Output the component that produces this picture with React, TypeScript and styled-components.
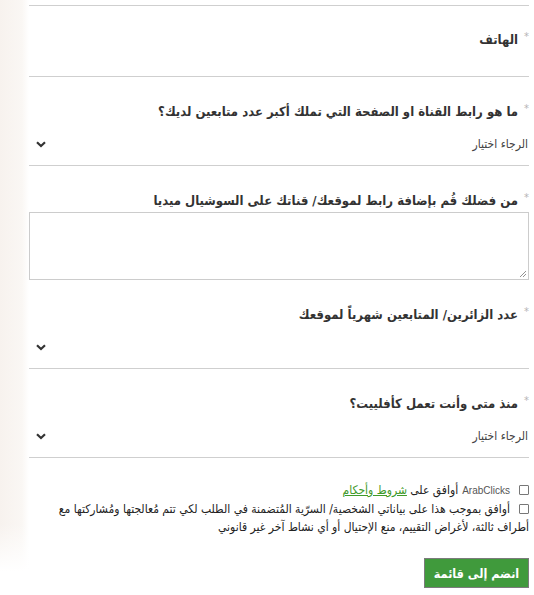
import React from "react";
import styled, { createGlobalStyle } from "styled-components";

const GlobalStyle = createGlobalStyle`
  html, body {
    margin: 0;
    padding: 0;
    background: #ffffff;
  }
  body {
    font-family: "DejaVu Sans Condensed", "DejaVu Sans", sans-serif;
  }
`;

const Page = styled.div`
  min-height: 595px;
  padding: 5px 5px 0 29px;
  box-sizing: border-box;
  background: linear-gradient(
      to bottom,
      rgba(255, 255, 255, 0) 0%,
      rgba(255, 255, 255, 0) 88%,
      #ffffff 96%
    ),
    linear-gradient(to right, #f7f2ee 0, #faf7f4 22px, #ffffff 29px);
`;

const Form = styled.form`
  direction: rtl;
  width: 500px;
  background: #ffffff;
  border-top: 1px solid #cfcfcf;
`;

const Field = styled.div<{ $divider?: boolean; $pb?: number; $pt?: number }>`
  display: flex;
  flex-direction: column;
  gap: 2px;
  padding-top: ${(p) => (p.$pt !== undefined ? p.$pt : 24)}px;
  padding-bottom: ${(p) => p.$pb || 0}px;
  border-bottom: ${(p) => (p.$divider ? "1px solid #cfcfcf" : "none")};
`;

const Label = styled.label`
  display: flex;
  align-items: center;
  gap: 6px;
  height: 20px;
  font-size: 13px;
  font-weight: bold;
  color: #333333;
  white-space: nowrap;
`;

const Required = styled.span`
  font-size: 11px;
  font-weight: normal;
  color: #b5b5b5;
  margin-top: -5px;
`;

const SelectBox = styled.div`
  height: 42px;
  display: flex;
  align-items: center;
  justify-content: space-between;
  padding: 0 1px 0 7px;
  font-size: 12px;
  color: #444444;
`;

const Chevron = () => (
  <svg width="10" height="7" viewBox="0 0 10 7">
    <path
      d="M1 1.2 L5 5 L9 1.2"
      fill="none"
      stroke="#333"
      strokeWidth="2.2"
    />
  </svg>
);

const TextArea = styled.div`
  position: relative;
  height: 68px;
  border: 1px solid #cccccc;
  box-sizing: border-box;
`;

const Grip = styled.svg`
  position: absolute;
  right: 1px;
  bottom: 1px;
`;

const Consent = styled.div`
  margin-top: 23px;
  display: flex;
  flex-direction: column;
  font-size: 12px;
  line-height: 18px;
  color: #222222;
`;

const CheckRow = styled.div`
  display: block;
`;

const Box = styled.span`
  display: inline-block;
  width: 8px;
  height: 8px;
  border: 1px solid #777;
  border-radius: 1px;
  margin-left: 9px;
  vertical-align: -1px;
`;

const Brand = styled.span`
  font-family: "Liberation Sans", Arial, sans-serif;
  font-size: 10px;
  color: #555555;
  margin-left: 4px;
`;

const Text = styled.span`
  color: #222222;
`;

const Link = styled.a`
  color: #3f9a2a;
  text-decoration: underline;
`;

const SubmitRow = styled.div`
  margin-top: 22px;
  display: flex;
`;

const Submit = styled.button`
  width: 105px;
  height: 30px;
  background: #409a3c;
  border: 1px solid #7b7b7b;
  color: #ffffff;
  font-family: "DejaVu Sans Condensed", "DejaVu Sans", sans-serif;
  font-size: 12.5px;
  font-weight: bold;
  white-space: nowrap;
  cursor: pointer;
`;

const SelectField: React.FC<{ label: string; placeholder?: string }> = ({
  label,
  placeholder,
}) => (
  <Field $divider>
    <Label>
      <Required>*</Required>
      {label}
    </Label>
    <SelectBox>
      <span>{placeholder}</span>
      <Chevron />
    </SelectBox>
  </Field>
);

export default function App() {
  return (
    <Page>
      <GlobalStyle />
      <Form>
        <Field $divider $pt={23} $pb={27}>
          <Label>
            <Required>*</Required>
            الهاتف
          </Label>
        </Field>
        <SelectField
          label="ما هو رابط القناة او الصفحة التي تملك أكبر عدد متابعين لديك؟"
          placeholder="الرجاء اختيار"
        />
        <Field>
          <Label>
            <Required>*</Required>
            من فضلك قُم بإضافة رابط لموقعك/ قناتك على السوشيال ميديا
          </Label>
          <TextArea>
            <Grip width="8" height="8" viewBox="0 0 8 8">
              <path d="M1 7 L7 1 M4 7 L7 4" stroke="#777" strokeWidth="0.8" />
            </Grip>
          </TextArea>
        </Field>
        <SelectField label="عدد الزائرين/ المتابعين شهرياً لموقعك" />
        <SelectField
          label="منذ متى وأنت تعمل كأفلييت؟"
          placeholder="الرجاء اختيار"
        />
        <Consent>
          <CheckRow>
            <Box />
            <Brand>ArabClicks</Brand>
            <Text>أوافق على </Text>
            <Link href="#">شروط وأحكام</Link>
          </CheckRow>
          <CheckRow>
            <Box />
            <Text>
              أوافق بموجب هذا على بياناتي الشخصية/ السرّية المُتضمنة في الطلب
              لكي تتم مُعالجتها ومُشاركتها مع أطراف ثالثة، لأغراض التقييم، منع
              الإحتيال أو أي نشاط آخر غير قانوني
            </Text>
          </CheckRow>
        </Consent>
        <SubmitRow>
          <Submit type="button">انضم إلى قائمة</Submit>
        </SubmitRow>
      </Form>
    </Page>
  );
}
